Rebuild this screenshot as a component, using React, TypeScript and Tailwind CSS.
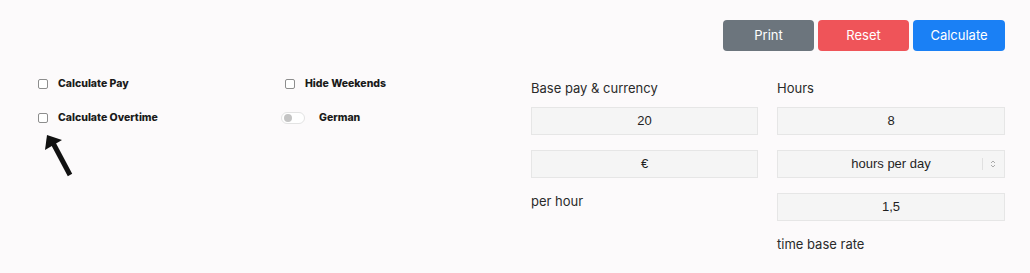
import React from "react";

const labelFont = { fontFamily: "Inter, 'Open Sans', sans-serif" };

function Check() {
  return <div className="w-[10px] h-[10px] rounded-[2px] border border-[#8d8d8d] bg-white shrink-0" />;
}

function Field({ value, select }: { value: string; select?: boolean }) {
  return (
    <div className="relative h-[28px] w-full bg-[#f5f5f5] border border-[#e6e6e6] flex items-center justify-center text-[13px] text-[#1f1f1f] font-['Liberation_Sans',Arial,sans-serif]">
      {value}
      {select && (
        <div className="absolute right-[8px] top-0 h-full flex items-center gap-[7px]">
          <div className="w-px h-[12px] bg-[#e0e0e0]" />
          <svg width="6" height="10" viewBox="0 0 6 10">
            <path d="M1 4 L3 2 L5 4" stroke="#aaa" strokeWidth="1" fill="none" />
            <path d="M1 6 L3 8 L5 6" stroke="#aaa" strokeWidth="1" fill="none" />
          </svg>
        </div>
      )}
    </div>
  );
}

export default function App() {
  return (
    <div className="w-[1030px] h-[273px] bg-[#fcfafb] overflow-hidden" style={labelFont}>
      <div className="flex justify-end gap-[4px] pt-[20px] pr-[25px]">
        <button className="h-[31px] w-[91px] rounded-[4px] bg-[#6c757d] text-white text-[13px]">Print</button>
        <button className="h-[31px] w-[91px] rounded-[4px] bg-[#ef5459] text-white text-[13px]">Reset</button>
        <button className="h-[31px] w-[92px] rounded-[4px] bg-[#1a80f5] text-white text-[13px]">Calculate</button>
      </div>
      <div className="flex mt-[26px]">
        <div className="w-[531px] flex flex-col pt-[1px]">
          <div className="flex items-center h-[12px]">
            <div className="w-[285px] flex items-center pl-[38px] gap-[10px]">
              <Check />
              <span className="text-[10.5px] font-extrabold text-[#1a1a1a]">Calculate Pay</span>
            </div>
            <div className="flex items-center gap-[10px]">
              <Check />
              <span className="text-[10.5px] font-extrabold text-[#1a1a1a]">Hide Weekends</span>
            </div>
          </div>
          <div className="flex items-center h-[12px] mt-[22px]">
            <div className="w-[281px] flex items-center pl-[38px] gap-[10px]">
              <Check />
              <span className="text-[10.5px] font-extrabold text-[#1a1a1a]">Calculate Overtime</span>
            </div>
            <div className="flex items-center gap-[14px]">
              <div className="w-[24px] h-[12px] rounded-full border border-[#e3e3e3] bg-white flex items-center pl-[2px]">
                <div className="w-[8px] h-[8px] rounded-full bg-[#c4c4c4]" />
              </div>
              <span className="text-[10.5px] font-extrabold text-[#1a1a1a]">German</span>
            </div>
          </div>
          <svg className="ml-[42px] mt-[9px]" width="34" height="46" viewBox="0 0 34 46">
            <polygon points="5,2 3,17 20,7" fill="#111" />
            <line x1="11" y1="10" x2="28" y2="42" stroke="#111" strokeWidth="5" />
          </svg>
        </div>
        <div className="flex gap-[19px] pt-[3px]">
          <div className="w-[227px] flex flex-col">
            <div className="h-[16px] leading-[16px] text-[13px] text-[#2a2a2a]">Base pay &amp; currency</div>
            <div className="mt-[11px]"><Field value="20" /></div>
            <div className="mt-[15px]"><Field value="€" /></div>
            <div className="mt-[15px] h-[16px] leading-[16px] text-[13px] text-[#2a2a2a]">per hour</div>
          </div>
          <div className="w-[228px] flex flex-col">
            <div className="h-[16px] leading-[16px] text-[13px] text-[#2a2a2a]">Hours</div>
            <div className="mt-[11px]"><Field value="8" /></div>
            <div className="mt-[15px]"><Field value="hours per day" select /></div>
            <div className="mt-[15px]"><Field value="1,5" /></div>
            <div className="mt-[15px] h-[16px] leading-[16px] text-[13px] text-[#2a2a2a]">time base rate</div>
          </div>
        </div>
      </div>
    </div>
  );
}
